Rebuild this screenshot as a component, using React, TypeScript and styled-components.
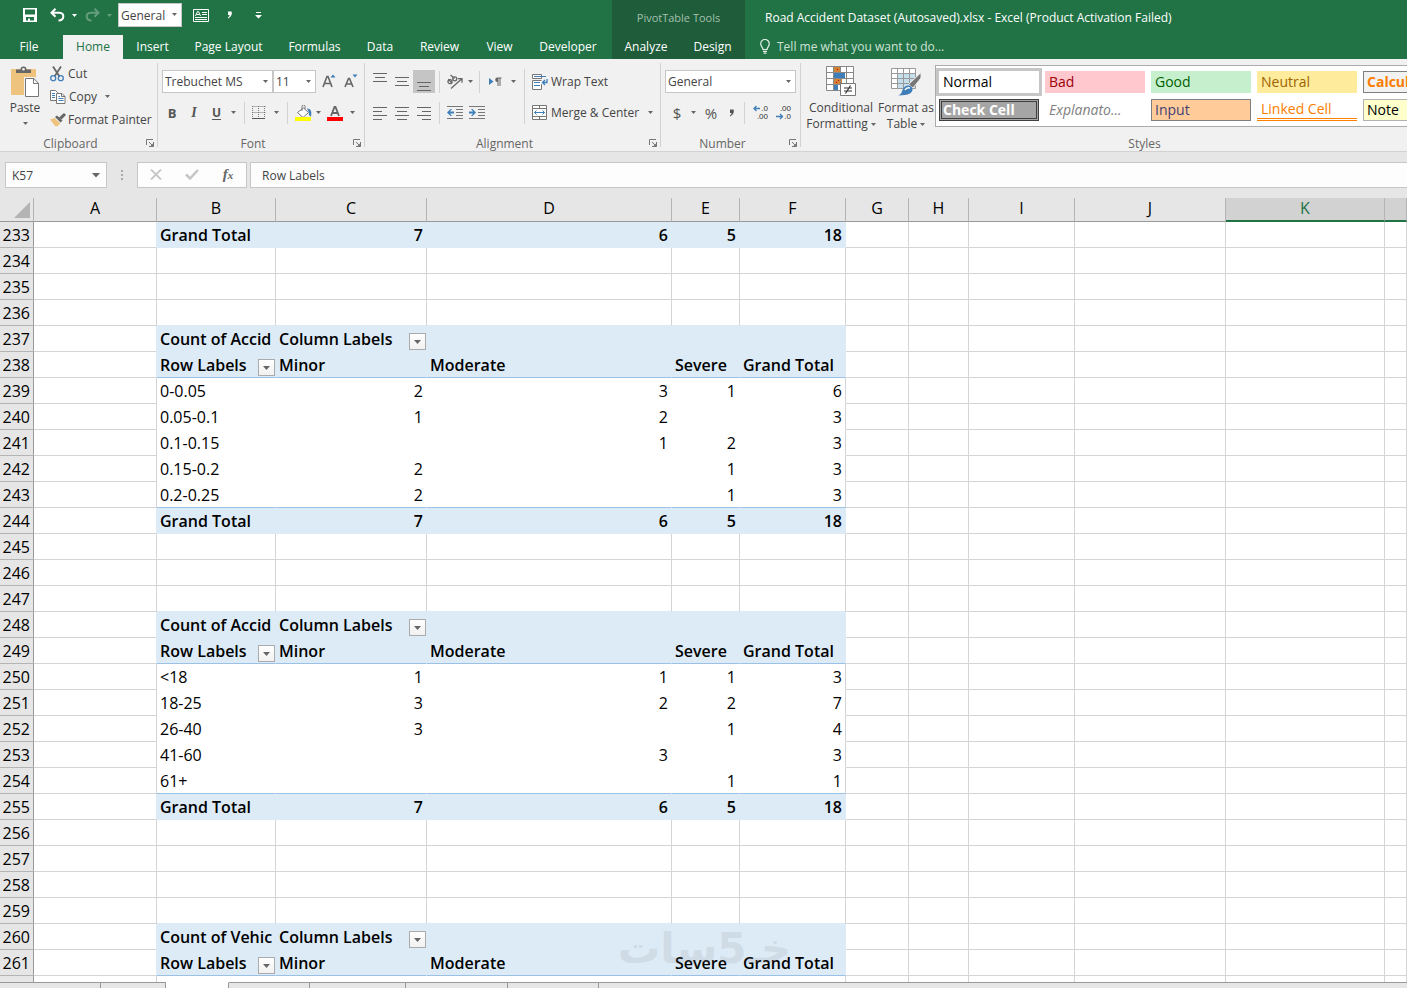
import React from "react";
import styled, { createGlobalStyle, css } from "styled-components";

const GREEN = "#217346";
const DARK_GREEN = "#1e5c3a";
const GRID = "#d4d4d4";
const PIVOT = "#ddebf7";
const PIVOT_LINE = "#9bc2e6";
const INK = "#444444";
const BLUE = "#3f7fb9";
const UI = `"Open Sans", "Noto Sans", sans-serif`;

const Global = createGlobalStyle`
  *, *::before, *::after { box-sizing: border-box; }
  body { margin: 0; font-family: ${UI}; font-size: 12px; color: ${INK}; background: #e6e6e6; }
  button, select, input { font: inherit; color: inherit; }
  button { background: none; border: 0; padding: 0; cursor: pointer; white-space: nowrap; }
  svg { display: block; flex: none; }
`;

const Page = styled.div`
  display: flex;
  flex-direction: column;
  height: 100vh;
  overflow: hidden;
`;

/* ---------- title bar and tabs ---------- */

const Header = styled.header`
  display: flex;
  height: 59px;
  flex: none;
  background: ${GREEN};
  color: #fff;
  overflow: hidden;
`;

const HeaderPart = styled.div<{ $width?: number; $dark?: boolean }>`
  display: flex;
  flex-direction: column;
  ${(p) => (p.$width ? `flex: 0 0 ${p.$width}px;` : "flex: 1; min-width: 0;")}
  background: ${(p) => (p.$dark ? DARK_GREEN : GREEN)};
`;

const QuickAccess = styled.div`
  display: flex;
  align-items: center;
  height: 35px;
  padding: 0 0 5px 18px;
`;

const QuickButton = styled.button<{ $width: number; $dim?: boolean }>`
  display: flex;
  align-items: center;
  justify-content: center;
  flex: none;
  width: ${(p) => p.$width}px;
  height: 24px;
  opacity: ${(p) => (p.$dim ? 0.3 : 1)};
`;

const QuickGap = styled.span`
  width: 8px;
`;

const Tabs = styled.nav`
  display: flex;
  height: 24px;
`;

const Tab = styled.button<{ $width: number; $active?: boolean; $file?: boolean }>`
  width: ${(p) => p.$width}px;
  margin-right: ${(p) => (p.$file ? 5 : 0)}px;
  line-height: 24px;
  text-align: center;
  ${(p) =>
    p.$active &&
    css`
      background: #f1f1f1;
      color: ${GREEN};
    `}
`;

const ContextTitle = styled.div`
  height: 35px;
  font-size: 11px;
  line-height: 36px;
  text-align: center;
  color: #a3c0af;
`;

const DocumentTitle = styled.h1`
  margin: 0;
  height: 35px;
  padding-left: 20px;
  font-size: 12px;
  font-weight: 400;
  line-height: 36px;
  white-space: nowrap;
`;

const TellMe = styled.button`
  display: flex;
  align-items: center;
  gap: 7px;
  height: 23px;
  padding-left: 15px;
  color: #cfe2d6;
`;

/* ---------- ribbon ---------- */

const Ribbon = styled.section`
  display: flex;
  flex: none;
  height: 93px;
  background: #f1f1f1;
  border-bottom: 1px solid #d2d2d2;
  overflow: hidden;
`;

const Group = styled.div<{ $width: number }>`
  display: flex;
  flex-direction: column;
  flex: 0 0 ${(p) => p.$width}px;
  position: relative;
  &::after {
    content: "";
    position: absolute;
    right: 0;
    top: 4px;
    bottom: 4px;
    width: 1px;
    background: #d2d2d2;
  }
`;

const GroupBody = styled.div`
  display: flex;
  height: 76px;
`;

const GroupFooter = styled.div`
  display: flex;
  align-items: center;
  height: 16px;
  padding-right: 4px;
  color: #666;
`;

const GroupName = styled.span`
  flex: 1;
  text-align: center;
  padding-right: 5px;
`;

const IconButton = styled.button<{ $width: number; $on?: boolean }>`
  display: flex;
  align-items: center;
  justify-content: center;
  flex: none;
  width: ${(p) => p.$width}px;
  height: 23px;
  background: ${(p) => (p.$on ? "#c5c5c5" : "transparent")};
`;

const Rows = styled.div<{ $left: number }>`
  display: flex;
  flex-direction: column;
  gap: 8px;
  padding: 11px 0 0 ${(p) => p.$left}px;
`;

const Row = styled.div`
  display: flex;
  align-items: center;
  height: 23px;
`;

const Divider = styled.span<{ $height?: number; $top?: number; $gap?: number }>`
  flex: none;
  width: 1px;
  height: ${(p) => p.$height ?? 22}px;
  margin: ${(p) => p.$top ?? 0}px ${(p) => p.$gap ?? 4}px 0;
  background: #d2d2d2;
`;

const PasteButton = styled.button`
  display: flex;
  flex-direction: column;
  align-items: center;
  width: 50px;
  padding-top: 7px;
  line-height: 20px;
  & > svg:last-child {
    margin-top: 4px;
  }
`;

const ClipboardActions = styled.div`
  display: flex;
  flex-direction: column;
  padding-top: 3px;
`;

const LabelButton = styled.button<{ $gap?: number }>`
  display: flex;
  align-items: center;
  gap: ${(p) => p.$gap ?? 3}px;
  height: 23px;
  & > span {
    margin-right: 5px;
  }
`;

const PickerBox = styled.span<{ $width: number; $height: number }>`
  position: relative;
  display: flex;
  flex: none;
  width: ${(p) => p.$width}px;
  height: ${(p) => p.$height}px;
  & > svg {
    position: absolute;
    right: 5px;
    top: 50%;
    margin-top: -2px;
    pointer-events: none;
  }
`;

const Select = styled.select`
  appearance: none;
  width: 100%;
  height: 100%;
  margin: 0;
  padding: 0 0 0 2px;
  border: 1px solid #c6c6c6;
  border-radius: 0;
  background: #fff;
  color: ${INK};
`;

const TallButton = styled.button<{ $width: number }>`
  display: flex;
  flex-direction: column;
  align-items: center;
  width: ${(p) => p.$width}px;
  padding-top: 7px;
  line-height: 16px;
  & > span {
    display: flex;
    align-items: center;
    gap: 3px;
  }
  & > svg {
    margin-bottom: 4px;
  }
`;

const Gallery = styled.div`
  display: grid;
  grid-template-columns: repeat(5, 100px);
  grid-template-rows: 22px 22px;
  gap: 6px;
  align-content: start;
  height: 62px;
  width: 535px;
  margin: 6px 0 0 4px;
  padding: 5px 3px;
  border: 1px solid #ababab;
  background: #fff;
`;

const StyleCell = styled.button<{ $look: string }>`
  height: 22px;
  padding: 0 4px;
  text-align: left;
  font-size: 14px;
  line-height: 18px;
  overflow: hidden;
  ${(p) => looks[p.$look]}
`;

const looks: Record<string, ReturnType<typeof css>> = {
  normal: css`background: #fff; color: #000; box-shadow: 0 0 0 3px #c6c6c6;`,
  bad: css`background: #ffc7ce; color: #9c0006;`,
  good: css`background: #c6efce; color: #006100;`,
  neutral: css`background: #ffeb9c; color: #9c6500;`,
  calculation: css`background: #f2f2f2; color: #fa7d00; border: 1px solid #7f7f7f; padding: 0 3px; font-weight: 700;`,
  check: css`background: #a5a5a5; color: #fff; border: 3px double #3f3f3f; padding: 0 1px; font-weight: 700; line-height: 14px;`,
  explanatory: css`color: #7f7f7f; font-style: italic;`,
  input: css`background: #ffcc99; color: #3f3f76; border: 1px solid #7f7f7f; padding: 0 3px;`,
  linked: css`color: #fa7d00; border-bottom: 3px double #ff8001;`,
  note: css`background: #ffffcc; color: #000; border: 1px solid #b2b2b2; padding: 0 3px;`,
};

/* ---------- formula bar ---------- */

const FormulaBar = styled.section`
  display: flex;
  align-items: center;
  flex: none;
  height: 46px;
  padding: 0 0 0 5px;
  background: #e6e6e6;
`;

const NameBox = styled.div`
  display: flex;
  align-items: center;
  width: 102px;
  height: 26px;
  padding-right: 6px;
  border: 1px solid #c6c6c6;
  background: #fdfdfd;
`;

const NameInput = styled.input`
  flex: 1;
  min-width: 0;
  padding: 0 0 0 6px;
  border: 0;
  background: none;
  outline: 0;
`;

const Grip = styled.span`
  display: flex;
  justify-content: center;
  width: 30px;
`;

const EntryButtons = styled.div`
  display: flex;
  width: 110px;
  height: 26px;
  border: 1px solid #c6c6c6;
  background: #fdfdfd;
`;

const FormulaInput = styled.input`
  flex: 1;
  min-width: 0;
  height: 26px;
  margin-left: 3px;
  padding: 0 11px;
  border: 1px solid #c6c6c6;
  border-right: 0;
  border-radius: 0;
  background: #fdfdfd;
  outline: 0;
`;

/* ---------- sheet ---------- */

const Sheet = styled.main`
  position: relative;
  flex: 1;
  min-height: 0;
  overflow: hidden;
  background: #fff;
`;

const Table = styled.table`
  width: 100%;
  table-layout: fixed;
  border-collapse: separate;
  border-spacing: 0;
  font-size: 16px;
  color: #000;
`;

const ColumnHead = styled.th<{ $selected?: boolean }>`
  height: 24px;
  padding: 0 0 1px;
  font-weight: 400;
  line-height: 20px;
  vertical-align: top;
  background: ${(p) => (p.$selected ? "#d2d2d2" : "#e6e6e6")};
  color: ${(p) => (p.$selected ? GREEN : "#000")};
  border-right: 1px solid #b4b4b4;
  border-bottom: ${(p) => (p.$selected ? `2px solid ${GREEN}` : "1px solid #999")};
`;

const Corner = styled.td`
  height: 24px;
  padding: 0 3px 3px 0;
  vertical-align: bottom;
  background: #e6e6e6;
  border-right: 1px solid #b4b4b4;
  border-bottom: 1px solid #999;
  & > svg {
    margin-left: auto;
  }
`;

const RowHead = styled.th`
  height: 26px;
  padding: 1px 3px 0 0;
  font-weight: 500;
  line-height: 24px;
  text-align: right;
  vertical-align: bottom;
  background: #e6e6e6;
  border-right: 1px solid #999;
  border-bottom: 1px solid #b4b4b4;
`;

const Cell = styled.td<{
  $fill: string;
  $right: string;
  $bottom: string;
  $bold?: boolean;
  $numeric?: boolean;
}>`
  position: relative;
  height: 26px;
  padding: 1px 3px 0;
  overflow: hidden;
  line-height: 24px;
  vertical-align: bottom;
  white-space: nowrap;
  font-weight: ${(p) => (p.$bold ? 600 : 500)};
  text-align: ${(p) => (p.$numeric ? "right" : "left")};
  background: ${(p) => p.$fill};
  border-right: 1px solid ${(p) => p.$right};
  border-bottom: 1px solid ${(p) => p.$bottom};
`;

const FilterButton = styled.button`
  position: absolute;
  right: 0;
  bottom: 1px;
  display: flex;
  align-items: center;
  justify-content: center;
  width: 17px;
  height: 17px;
  border: 1px solid #ababab;
  background: linear-gradient(#fff, #f1f1f1);
`;

const Watermark = styled.div`
  position: absolute;
  left: 618px;
  bottom: 8px;
  color: #808080;
  font-family: "DejaVu Sans", sans-serif;
  font-size: 42px;
  font-weight: 700;
  line-height: 50px;
  opacity: 0.14;
  pointer-events: none;
`;

const SheetTabs = styled.nav`
  display: flex;
  flex: none;
  height: 6px;
  background: #e6e6e6;
`;

const SheetTab = styled.button<{ $width?: number; $active?: boolean; $last?: boolean }>`
  ${(p) => (p.$width ? `width: ${p.$width}px;` : "flex: 1;")}
  height: 6px;
  border-top: 1px solid ${(p) => (p.$active ? "#fff" : "#999")};
  border-right: ${(p) => (p.$last ? "0" : "1px solid #999")};
  background: ${(p) => (p.$active ? "#fff" : "#e6e6e6")};
`;

/* ---------- icons ---------- */

const Caret = ({ color = "#666" }: { color?: string }) => (
  <svg width="5" height="3" viewBox="0 0 5 3" fill={color}>
    <path d="M0 0h5L2.5 3z" />
  </svg>
);

const BigCaret = ({ color = "#666" }: { color?: string }) => (
  <svg width="8" height="5" viewBox="0 0 8 5" fill={color}>
    <path d="M0 0h8L4 4.5z" />
  </svg>
);

const Launcher = () => (
  <svg width="8" height="8" viewBox="0 0 8 8" fill="none" stroke="#777">
    <path d="M.5 6V.5H7M3 3l3.5 3.5M7.500 3v4.500H3" />
    <path d="M7.500 4v3.500H4z" fill="#777" stroke="none" />
  </svg>
);

const SaveIcon = () => (
  <svg width="14" height="14" viewBox="0 0 14 14">
    <path fillRule="evenodd" fill="#fff" d="M0 0h14v14H0zM2 1.500v5h10v-5zM3 9v3.500h2V10.500h2v2h4V9z" />
  </svg>
);

const UndoIcon = ({ flip }: { flip?: boolean }) => (
  <svg width="15" height="14" viewBox="0 0 15 14" fill="none" stroke="#fff" strokeWidth="2">
    <g transform={flip ? "matrix(-1 0 0 1 15 0)" : undefined}>
      <path d="M5.500 .8L1.500 4.800l4 4M2 4.800h7.500c5.500 0 5 7.700-1 7.700" />
    </g>
  </svg>
);

const CardIcon = () => (
  <svg width="16" height="13" viewBox="0 0 16 13" fill="none" stroke="#fff">
    <path d="M.5.5h15v12H.5zM9 3.500h5M9 5.500h5M2 8.500h12M2 10.500h12" />
    <path d="M2.500 7L4.500 2.500h1L7.500 7M3.500 5.500h3" />
  </svg>
);

const CommaIcon = ({ color }: { color: string }) => (
  <svg width="6" height="8" viewBox="0 0 6 8" fill={color}>
    <path d="M1 .5h3.500c1 2-.2 5.500-3.500 7V6.300C2.300 5.600 2.700 4.600 2.500 4H1z" />
  </svg>
);

const CustomizeIcon = () => (
  <svg width="7" height="7" viewBox="0 0 7 7" fill="#fff">
    <path d="M1 0h5v1H1zM0 3h7L3.500 6.500z" />
  </svg>
);

const BulbIcon = () => (
  <svg width="10" height="15" viewBox="0 0 10 15" fill="none" stroke="#e4efe8" strokeWidth="1.200">
    <path d="M3 10.500C3 8.500.7 7.500.7 4.800a4.300 4.300 0 0 1 8.600 0C9.300 7.500 7 8.500 7 10.500zM3 12.400h4M3.500 14.200h3" />
  </svg>
);

const PasteIcon = () => (
  <svg width="30" height="32" viewBox="0 0 30 32">
    <rect x="1" y="3" width="25" height="26" rx="1" fill="#eec37d" />
    <path d="M6 7V3.500h4.500a3 3 0 0 1 6 0H21V7z" fill="#666" />
    <circle cx="13.500" cy="3.300" r="1.300" fill="#f1f1f1" />
    <path d="M15.500 12.500h9l4.500 5v13H15.500z" fill="#fff" stroke="#f1f1f1" strokeWidth="3" />
    <path d="M15.500 12.500h8.500l4.500 5v13h-13zM23.500 12.500v5h5" fill="#fff" stroke="#777" />
  </svg>
);

const CutIcon = () => (
  <svg width="14" height="16" viewBox="0 0 14 16" fill="none">
    <path d="M3 .5l6.500 10M11 .5l-6.500 10" stroke="#666" strokeWidth="1.800" />
    <circle cx="3.200" cy="12.200" r="2.500" stroke={BLUE} strokeWidth="1.300" />
    <circle cx="10.800" cy="12.200" r="2.500" stroke={BLUE} strokeWidth="1.300" />
  </svg>
);

const CopyIcon = () => (
  <svg width="16" height="14" viewBox="0 0 16 14" fill="#fff" stroke="#777">
    <path d="M.5.5h5l2 2v8h-7z" />
    <path d="M2 3.500h3M2 5.500h3M2 7.500h3" stroke={BLUE} />
    <path d="M6.500 3.500h5.500l3 3v7H6.500zM11.500 3.500v3H15" />
    <path d="M8.500 6.500H10M8.500 8.500h5M8.500 10.500h5" stroke={BLUE} />
  </svg>
);

const PainterIcon = () => (
  <svg width="16" height="14" viewBox="0 0 16 14">
    <path d="M0 6.500L4.500 5l6 5.500-3.500 3L6 13l-.5 .5z" fill="#eec37d" />
    <path d="M5 4l2-1.500 5.500 5-2 2z" fill="#666" />
    <path d="M9 4.500L14 0l2 2-4.500 4.500z" fill="#666" />
  </svg>
);

const FontSizeIcon = ({ down }: { down?: boolean }) => (
  <svg width="14" height="16" viewBox="0 0 14 16" fill="none">
    {down ? (
      <>
        <path d="M1 13L4.500 4.500h1L9 13M2.300 10h5.400" stroke="#666" strokeWidth="1.600" />
        <path d="M8.500 .5h5L11 3.500z" fill={BLUE} />
      </>
    ) : (
      <>
        <path d="M1 13L5 2.500h1L10 13M2.500 9.500h6" stroke="#666" strokeWidth="1.600" />
        <path d="M8.500 3.500h5L11 .5z" fill={BLUE} />
      </>
    )}
  </svg>
);

const BorderIcon = () => (
  <svg width="14" height="14" viewBox="0 0 14 14" fill="none" stroke="#777">
    <path d="M.5.5h13M.5 6.500h13M.5 0v12M6.500 0v12M12.500 0v12" strokeDasharray="1 1" />
    <path d="M0 12.500h13" stroke="#555" />
  </svg>
);

const FillIcon = () => (
  <svg width="17" height="16" viewBox="0 0 17 16">
    <path d="M2.500 7.500l6-4.500 5 4.500-5.500 5z" fill="#fff" stroke="#777" />
    <path d="M7 6V1.500a1.500 1.500 0 0 1 3 0V4" fill="none" stroke="#777" />
    <path d="M12 3.500c4 0 5 3 4 8-2-.5-2.500-2-2-4z" fill={BLUE} />
    <rect y="12" width="16" height="4" fill="#ffff00" />
  </svg>
);

const FontColorIcon = () => (
  <svg width="16" height="16" viewBox="0 0 16 16">
    <path d="M4 11L7.500 2h1L12 11M5.500 8h5" fill="none" stroke="#666" strokeWidth="1.800" />
    <rect y="12" width="16" height="4" fill="#ff0000" />
  </svg>
);

type Line = [number, number];

const LinesIcon = ({ lines, top }: { lines: Line[]; top: number }) => (
  <svg width="14" height="19" viewBox="0 0 14 19" fill="#666">
    {lines.map(([x, w], i) => (
      <rect key={i} x={x} y={top + i * 4} width={w} height="1" />
    ))}
  </svg>
);

const OrientationIcon = () => (
  <svg width="18" height="16" viewBox="0 0 18 16" fill="none" stroke="#666" strokeWidth="1.300">
    <circle cx="4" cy="7.700" r="2" />
    <path d="M2.300 5.200l4 4" />
    <circle cx="8.800" cy="4.800" r="2" />
    <path d="M4.500 1l4 3.500M5 14.500L15.500 5M12 4.700h4v4" />
  </svg>
);

const DirectionIcon = () => (
  <svg width="13" height="10" viewBox="0 0 13 10">
    <path d="M0 1l4.500 3.500L0 8z" fill={BLUE} />
    <path d="M8.500 5H8A2.300 2.300 0 0 1 8 .5h4.500v1h-1V9h-1V1.500h-1V9h-1z" fill="#666" />
  </svg>
);

const IndentIcon = ({ out }: { out?: boolean }) => (
  <svg width="16" height="13" viewBox="0 0 16 13">
    <path d="M0 0h16v1H0zM9 3h7v1H9zM9 6h7v1H9zM9 9h7v1H9zM0 12h16v1H0z" fill="#777" />
    {out ? (
      <path d="M0 6.500L3.500 3h1.500L3 5.500h4v2H3L5 10H3.500z" fill={BLUE} />
    ) : (
      <path d="M7 6.500L3.500 3H2l2 2.500H0v2h4L2 10h1.500z" fill={BLUE} />
    )}
  </svg>
);

const WrapIcon = () => (
  <svg width="16" height="16" viewBox="0 0 16 16" fill="none" stroke="#777">
    <path d="M9.500 4.500V.5H.5v4zM9.500 10v5.500H.5v-9h9" fill="#fff" />
    <path d="M2 2.500h12M2 8.500h6M2 11.500h6" stroke={BLUE} />
    <path d="M15 5v3.500h-4M13 6l-2.500 2.500L13 11" stroke={BLUE} strokeWidth="1.300" />
  </svg>
);

const MergeIcon = () => (
  <svg width="15" height="15" viewBox="0 0 15 15" fill="none" stroke="#777">
    <path d="M.5.5h14v14H.5zM.5 3.500h14M.5 11.500h14M7.500.5v3M7.500 11.500v3" fill="#fff" />
    <path d="M2.500 7.500h10M4.500 5.500l-2 2 2 2M10.500 5.500l2 2-2 2" stroke={BLUE} />
  </svg>
);

const Digits = styled.text`
  font: 8px "Liberation Sans", sans-serif;
  fill: #333;
`;

const DecimalIcon = ({ less }: { less?: boolean }) => (
  <svg width="16" height="17" viewBox="0 0 16 17" fill="none" stroke={BLUE} strokeWidth="1.300">
    {less ? (
      <>
        <Digits x="15" y="7" textAnchor="end" stroke="none">.00</Digits>
        <Digits x="15" y="15" textAnchor="end" stroke="none">.0</Digits>
        <path d="M0 12.500h6M4 10L6.500 12.500 4 15" />
      </>
    ) : (
      <>
        <Digits x="15" y="7" textAnchor="end" stroke="none">.0</Digits>
        <Digits x="15" y="15" textAnchor="end" stroke="none">.00</Digits>
        <path d="M1 4.500h6M3.500 2L1 4.500 3.500 7" />
      </>
    )}
  </svg>
);

const ConditionalIcon = () => (
  <svg width="30" height="30" viewBox="0 0 30 30">
    <path d="M.5.500h27v24H.5z" fill="#fff" />
    <path d="M8 1h6v5H8zM8 13h8v5H8z" fill="#d28235" />
    <path d="M8 7h11v5H8zM8 19h4v5H8z" fill={BLUE} />
    <path d="M.5.500h27v24H.5zM.5 6.500h27M.5 12.500h27M.5 18.500h27M7.500.500v24M14.500.500v6M14.500 12.500v6M20.500.500v24" fill="none" stroke="#888" />
    <path d="M8 7h11v5H8z" fill={BLUE} />
    <path d="M11 3h1v1h-1zM12 14h1v1h-1zM10 16h1v1h-1z" fill="#c00" />
    <path d="M14.500 17.500h15v12h-15z" fill="#fff" stroke="#777" />
    <path d="M18 22h8M18 25h8M24.500 19.500l-5 8" stroke="#333" strokeWidth="1.200" />
  </svg>
);

const FormatTableIcon = () => (
  <svg width="30" height="30" viewBox="0 0 30 30">
    <path d="M.5 2.500h24v20H.5z" fill="#fff" />
    <path d="M6 8h18v14H6z" fill="#c5dfec" />
    <path d="M.5 2.500h24v20H.5zM.5 7.500h24M.5 12.500h24M.5 17.500h24M6.500 2.500v20M12.500 2.500v20M18.500 2.500v20" fill="none" stroke="#999" />
    <path d="M30 6.500V12l-8 10-4.500-3.500z" fill="#777" stroke="#f1f1f1" />
    <path d="M17 19.500c3 0 4.500 1.500 4.500 4 0 3-3 6-14.500 6 4-1.500 3.500-4 5-6.500 1-2 3-3.500 5-3.500z" fill={BLUE} />
    <path d="M14 24c1-2 3-2.500 5-2" fill="none" stroke="#fff" strokeWidth="1.500" />
  </svg>
);

const GripIcon = () => (
  <svg width="2" height="11" viewBox="0 0 2 11" fill="#aaa">
    <path d="M0 0h2v2H0zM0 4h2v2H0zM0 8h2v2H0z" />
  </svg>
);

const CancelIcon = () => (
  <svg width="12" height="11" viewBox="0 0 12 11" fill="none" stroke="#c6c6c6" strokeWidth="1.800">
    <path d="M1 .5l10 10M11 .5l-10 10" />
  </svg>
);

const CheckIcon = () => (
  <svg width="14" height="11" viewBox="0 0 14 11" fill="none" stroke="#c6c6c6" strokeWidth="2.500">
    <path d="M1 5.500l4 4L13 1" />
  </svg>
);

const Fx = styled.span`
  font: italic 700 15px "Liberation Serif", serif;
  color: #666;
  & > small {
    font-size: 11px;
  }
`;

const Letter = styled.span<{ $kind: "b" | "i" | "u" | "symbol" }>`
  color: #555;
  line-height: 16px;
  ${(p) => p.$kind === "b" && "font-weight: 700; font-size: 13px;"}
  ${(p) => p.$kind === "i" && `font-family: "Liberation Serif", serif; font-style: italic; font-weight: 700; font-size: 14px;`}
  ${(p) => p.$kind === "u" && "font-weight: 700; text-decoration: underline; text-underline-offset: 2px;"}
  ${(p) => p.$kind === "symbol" && "font-size: 15px; font-weight: 500;"}
`;

/* ---------- data ---------- */

const columns = [
  ["A", 123], ["B", 119], ["C", 151], ["D", 245], ["E", 68], ["F", 106],
  ["G", 63], ["H", 60], ["I", 106], ["J", 151], ["K", 159],
] as const;

type PivotRow = { kind: "top" | "labels" | "data" | "total"; cells: string[] };

const labels: PivotRow = { kind: "labels", cells: ["Row Labels", "Minor", "Moderate", "Severe", "Grand Total"] };
const total: PivotRow = { kind: "total", cells: ["Grand Total", "7", "6", "5", "18"] };
const top = (name: string): PivotRow => ({ kind: "top", cells: [name, "Column Labels", "", "", ""] });
const data = (...cells: string[]): PivotRow => ({ kind: "data", cells });

const pivot: Record<number, PivotRow> = {
  233: total,
  237: top("Count of Accid"),
  238: labels,
  239: data("0-0.05", "2", "3", "1", "6"),
  240: data("0.05-0.1", "1", "2", "", "3"),
  241: data("0.1-0.15", "", "1", "2", "3"),
  242: data("0.15-0.2", "2", "", "1", "3"),
  243: data("0.2-0.25", "2", "", "1", "3"),
  244: total,
  248: top("Count of Accid"),
  249: labels,
  250: data("<18", "1", "1", "1", "3"),
  251: data("18-25", "3", "2", "2", "7"),
  252: data("26-40", "3", "", "1", "4"),
  253: data("41-60", "", "3", "", "3"),
  254: data("61+", "", "", "1", "1"),
  255: total,
  260: top("Count of Vehic"),
  261: labels,
  262: data("", "", "", "", ""),
};

const rowNumbers = Array.from({ length: 30 }, (_, i) => 233 + i);

const isFilled = (row?: PivotRow) => !!row && row.kind !== "data";

const FilterCaret = () => (
  <svg width="7" height="4" viewBox="0 0 7 4" fill="#666">
    <path d="M0 0h7L3.500 4z" />
  </svg>
);

const SheetRow = ({ n }: { n: number }) => {
  const row = pivot[n];
  const below = pivot[n + 1];
  const filled = isFilled(row);
  return (
    <tr>
      <RowHead scope="row">{n}</RowHead>
      {[...columns.map((c) => c[0]), "L"].map((name, i) => {
        const inPivot = i >= 1 && i <= 5;
        let right = GRID;
        let bottom = GRID;
        if (filled && i <= 5) right = PIVOT;
        else if (row && i >= 1 && i < 5) right = "#fff";
        if (inPivot) {
          if (row?.kind === "labels" || (row?.kind === "data" && below?.kind === "total")) bottom = PIVOT_LINE;
          else if (filled || isFilled(below)) bottom = PIVOT;
          else if (row) bottom = "#fff";
        }
        const text = row && inPivot ? row.cells[i - 1] : "";
        const filter =
          (row?.kind === "top" && i === 2) || (row?.kind === "labels" && i === 1);
        return (
          <Cell
            key={name}
            $fill={filled && inPivot ? PIVOT : "#fff"}
            $right={right}
            $bottom={bottom}
            $bold={filled}
            $numeric={i >= 2 && (row?.kind === "data" || row?.kind === "total")}
          >
            {text}
            {filter && (
              <FilterButton aria-label={`Filter ${text}`}>
                <FilterCaret />
              </FilterButton>
            )}
          </Cell>
        );
      })}
    </tr>
  );
};

const styleCells = [
  ["normal", "Normal"], ["bad", "Bad"], ["good", "Good"], ["neutral", "Neutral"], ["calculation", "Calculation"],
  ["check", "Check Cell"], ["explanatory", "Explanato..."], ["input", "Input"], ["linked", "Linked Cell"], ["note", "Note"],
];

const mainTabs: [string, number][] = [
  ["File", 58], ["Home", 60], ["Insert", 59], ["Page Layout", 93], ["Formulas", 79], ["Data", 52],
  ["Review", 67], ["View", 53], ["Developer", 84],
];

const Picker = ({ label, value, width, height = 24 }: { label: string; value: string; width: number; height?: number }) => (
  <PickerBox $width={width} $height={height}>
    <Select aria-label={label} defaultValue={value}>
      <option>{value}</option>
    </Select>
    <Caret />
  </PickerBox>
);

const Footer = ({ name, launcher = true }: { name: string; launcher?: boolean }) => (
  <GroupFooter>
    <GroupName>{name}</GroupName>
    {launcher && (
      <button aria-label={`${name} settings`}>
        <Launcher />
      </button>
    )}
  </GroupFooter>
);

const full: Line = [0, 14];

export default function App() {
  return (
    <Page>
      <Global />
      <Header>
        <HeaderPart $width={612}>
          <QuickAccess>
            <QuickButton $width={24} aria-label="Save"><SaveIcon /></QuickButton>
            <QuickButton $width={30} aria-label="Undo"><UndoIcon /></QuickButton>
            <QuickButton $width={4} aria-label="Undo history"><Caret color="#fff" /></QuickButton>
            <QuickButton $width={32} $dim aria-label="Redo"><UndoIcon flip /></QuickButton>
            <QuickButton $width={2} $dim aria-label="Redo history"><Caret color="#fff" /></QuickButton>
            <QuickGap />
            <Picker label="Quick number format" value="General" width={64} />
            <QuickButton $width={37} aria-label="Form"><CardIcon /></QuickButton>
            <QuickButton $width={21} aria-label="Comma style"><CommaIcon color="#fff" /></QuickButton>
            <QuickButton $width={37} aria-label="Customize toolbar"><CustomizeIcon /></QuickButton>
          </QuickAccess>
          <Tabs>
            {mainTabs.map(([name, width]) => (
              <Tab key={name} $width={width} $active={name === "Home"} $file={name === "File"}>{name}</Tab>
            ))}
          </Tabs>
        </HeaderPart>
        <HeaderPart $width={133} $dark>
          <ContextTitle>PivotTable Tools</ContextTitle>
          <Tabs>
            <Tab $width={68}>Analyze</Tab>
            <Tab $width={65}>Design</Tab>
          </Tabs>
        </HeaderPart>
        <HeaderPart>
          <DocumentTitle>Road Accident Dataset (Autosaved).xlsx - Excel (Product Activation Failed)</DocumentTitle>
          <TellMe><BulbIcon />Tell me what you want to do...</TellMe>
        </HeaderPart>
      </Header>

      <Ribbon>
        <Group $width={158}>
          <GroupBody>
            <PasteButton><PasteIcon />Paste<Caret /></PasteButton>
            <ClipboardActions>
              <LabelButton $gap={4}><CutIcon />Cut</LabelButton>
              <LabelButton><CopyIcon /><span>Copy</span><Caret /></LabelButton>
              <LabelButton $gap={2}><PainterIcon />Format Painter</LabelButton>
            </ClipboardActions>
          </GroupBody>
          <Footer name="Clipboard" />
        </Group>

        <Group $width={207}>
          <GroupBody>
            <Rows $left={4}>
              <Row>
                <Picker label="Font" value="Trebuchet MS" width={111} height={23} />
                <Picker label="Font size" value="11" width={43} height={23} />
                <IconButton $width={26} aria-label="Increase font size"><FontSizeIcon /></IconButton>
                <IconButton $width={18} aria-label="Decrease font size"><FontSizeIcon down /></IconButton>
              </Row>
              <Row>
                <IconButton $width={20} aria-label="Bold"><Letter $kind="b">B</Letter></IconButton>
                <IconButton $width={24} aria-label="Italic"><Letter $kind="i">I</Letter></IconButton>
                <IconButton $width={21} aria-label="Underline"><Letter $kind="u">U</Letter></IconButton>
                <IconButton $width={13} aria-label="Underline options"><Caret /></IconButton>
                <Divider />
                <IconButton $width={20} aria-label="Borders"><BorderIcon /></IconButton>
                <IconButton $width={14} aria-label="Border options"><Caret /></IconButton>
                <Divider />
                <IconButton $width={22} aria-label="Fill color"><FillIcon /></IconButton>
                <IconButton $width={8} aria-label="Fill options"><Caret /></IconButton>
                <IconButton $width={26} aria-label="Font color"><FontColorIcon /></IconButton>
                <IconButton $width={8} aria-label="Font color options"><Caret /></IconButton>
              </Row>
            </Rows>
          </GroupBody>
          <Footer name="Font" />
        </Group>

        <Group $width={296}>
          <GroupBody>
            <Rows $left={4}>
              <Row>
                <IconButton $width={22} aria-label="Top align"><LinesIcon top={1} lines={[full, [2, 10], full]} /></IconButton>
                <IconButton $width={22} aria-label="Middle align"><LinesIcon top={5} lines={[full, [2, 10], full]} /></IconButton>
                <IconButton $width={22} $on aria-label="Bottom align"><LinesIcon top={10} lines={[full, [2, 10], full]} /></IconButton>
                <Divider />
                <IconButton $width={22} aria-label="Orientation"><OrientationIcon /></IconButton>
                <IconButton $width={9} aria-label="Orientation options"><Caret /></IconButton>
                <Divider />
                <IconButton $width={22} aria-label="Text direction"><DirectionIcon /></IconButton>
                <IconButton $width={15} aria-label="Direction options"><Caret /></IconButton>
              </Row>
              <Row>
                <IconButton $width={22} aria-label="Align left"><LinesIcon top={4} lines={[full, [0, 9], full, [0, 9]]} /></IconButton>
                <IconButton $width={22} aria-label="Center"><LinesIcon top={4} lines={[full, [2, 10], full, [2, 10]]} /></IconButton>
                <IconButton $width={22} aria-label="Align right"><LinesIcon top={4} lines={[full, [5, 9], full, [5, 9]]} /></IconButton>
                <Divider />
                <IconButton $width={22} aria-label="Decrease indent"><IndentIcon out /></IconButton>
                <IconButton $width={22} aria-label="Increase indent"><IndentIcon /></IconButton>
              </Row>
            </Rows>
            <Divider $height={55} $top={10} $gap={3} />
            <Rows $left={4}>
              <LabelButton><WrapIcon />Wrap Text</LabelButton>
              <LabelButton $gap={4}><MergeIcon /><span>Merge &amp; Center</span><Caret /></LabelButton>
            </Rows>
          </GroupBody>
          <Footer name="Alignment" />
        </Group>

        <Group $width={140}>
          <GroupBody>
            <Rows $left={4}>
              <Picker label="Number format" value="General" width={131} height={23} />
              <Row>
                <IconButton $width={24} aria-label="Accounting format"><Letter $kind="symbol">$</Letter></IconButton>
                <IconButton $width={8} aria-label="Currency options"><Caret /></IconButton>
                <IconButton $width={28} aria-label="Percent style"><Letter $kind="symbol">%</Letter></IconButton>
                <IconButton $width={14} aria-label="Comma style"><CommaIcon color="#555" /></IconButton>
                <Divider $gap={5} />
                <IconButton $width={22} aria-label="Increase decimal"><DecimalIcon /></IconButton>
                <IconButton $width={24} aria-label="Decrease decimal"><DecimalIcon less /></IconButton>
              </Row>
            </Rows>
          </GroupBody>
          <Footer name="Number" />
        </Group>

        <Group $width={696}>
          <GroupBody>
            <TallButton $width={80}>
              <ConditionalIcon />
              <span>Conditional</span>
              <span>Formatting<Caret /></span>
            </TallButton>
            <TallButton $width={50}>
              <FormatTableIcon />
              <span>Format as</span>
              <span>Table<Caret /></span>
            </TallButton>
            <Gallery>
              {styleCells.map(([look, name]) => (
                <StyleCell key={name} $look={look}>{name}</StyleCell>
              ))}
            </Gallery>
          </GroupBody>
          <Footer name="Styles" launcher={false} />
        </Group>
      </Ribbon>

      <FormulaBar>
        <NameBox>
          <NameInput aria-label="Name box" defaultValue="K57" />
          <BigCaret />
        </NameBox>
        <Grip><GripIcon /></Grip>
        <EntryButtons>
          <IconButton $width={36} aria-label="Cancel"><CancelIcon /></IconButton>
          <IconButton $width={36} aria-label="Enter"><CheckIcon /></IconButton>
          <IconButton $width={36} aria-label="Insert function"><Fx>f<small>x</small></Fx></IconButton>
        </EntryButtons>
        <FormulaInput aria-label="Formula" defaultValue="Row Labels" />
      </FormulaBar>

      <Sheet>
        <Table>
          <colgroup>
            <col width={34} />
            {columns.map(([name, width]) => <col key={name} width={width} />)}
            <col />
          </colgroup>
          <thead>
            <tr>
              <Corner>
                <svg width="16" height="16" viewBox="0 0 16 16"><path d="M16 0v16H0z" fill="#b4b4b4" /></svg>
              </Corner>
              {columns.map(([name]) => (
                <ColumnHead key={name} scope="col" $selected={name === "K"}>{name}</ColumnHead>
              ))}
              <ColumnHead scope="col" $selected aria-label="L" />
            </tr>
          </thead>
          <tbody>
            {rowNumbers.map((n) => <SheetRow key={n} n={n} />)}
          </tbody>
        </Table>
        <Watermark dir="rtl" lang="ar">خـ5سات</Watermark>
      </Sheet>

      <SheetTabs>
        <SheetTab $width={101} aria-label="Sheet 1" />
        <SheetTab $width={65} aria-label="Sheet 2" />
        <SheetTab $width={63} $active aria-label="Sheet 3" />
        <SheetTab $width={81} aria-label="Sheet 4" />
        <SheetTab $width={96} aria-label="Sheet 5" />
        <SheetTab $width={102} aria-label="Sheet 6" />
        <SheetTab $width={91} aria-label="Sheet 7" />
        <SheetTab $last aria-label="Sheet 8" />
      </SheetTabs>
    </Page>
  );
}
